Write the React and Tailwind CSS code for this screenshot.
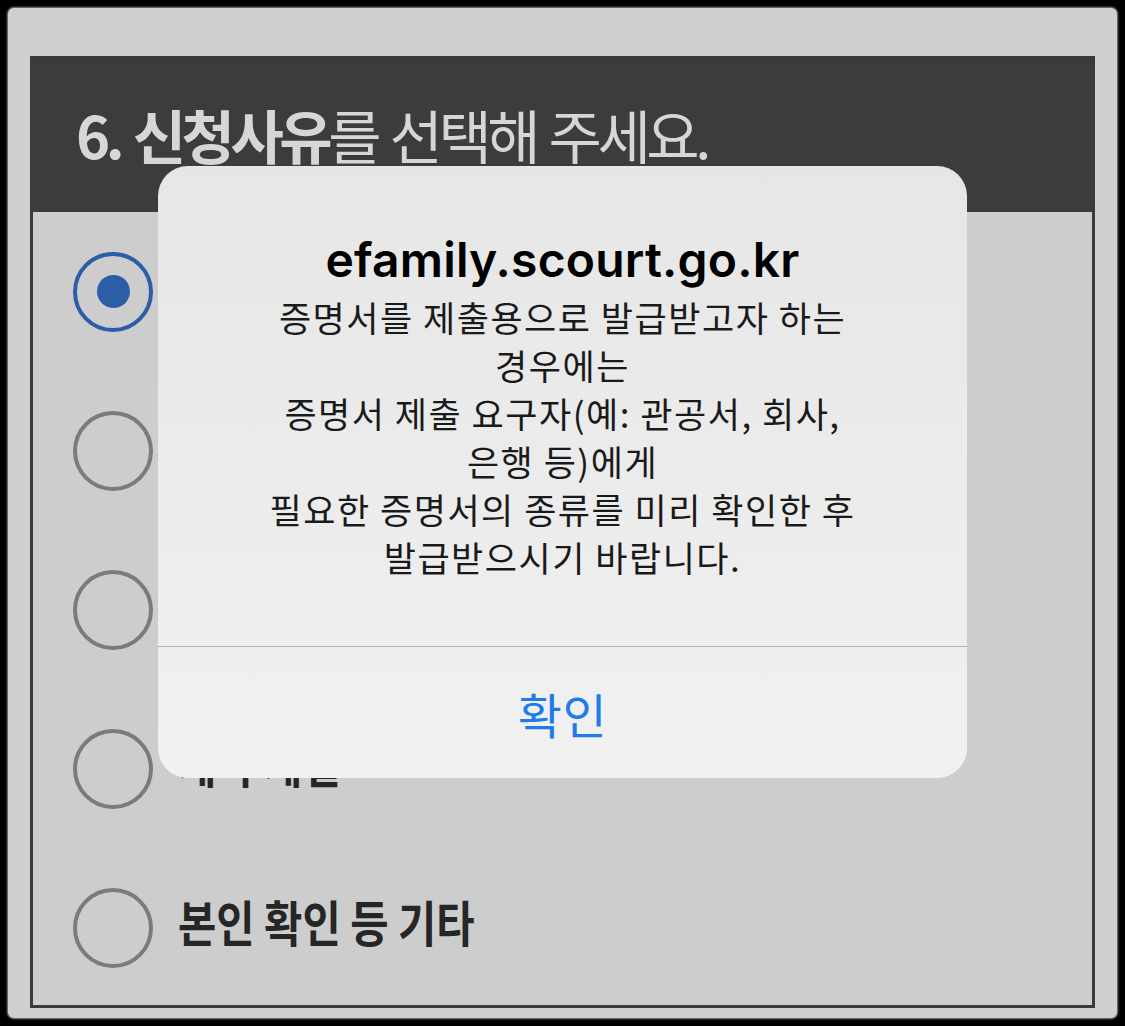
import React from 'react';

/* ========================================================================
 * DATOS
 * ======================================================================== */
const REASONS = [
  { label: '회사 제출', checked: true },
  { label: '관공서 제출', checked: false },
  { label: '금융기관 제출', checked: false },
  { label: '계약 체결', checked: false },
  { label: '본인 확인 등 기타', checked: false },
];

const MESSAGE = [
  '증명서를 제출용으로 발급받고자 하는',
  '경우에는',
  '증명서 제출 요구자(예: 관공서, 회사,',
  '은행 등)에게',
  '필요한 증명서의 종류를 미리 확인한 후',
  '발급받으시기 바랍니다.',
];

const KR = { fontFamily: '"Noto Sans CJK KR", "Noto Sans", sans-serif' };

/* ========================================================================
 * RADIO
 * ======================================================================== */
const Radio = ({ checked }) => (
  <div
    className={`w-[80px] h-[80px] rounded-full border-[4px] flex items-center justify-center shrink-0 ${
      checked ? 'border-[#2c5ea8]' : 'border-[#7b7b7b]'
    }`}
  >
    {checked && <div className="w-[33px] h-[33px] rounded-full bg-[#2c5ea8]" />}
  </div>
);

/* ========================================================================
 * APP
 * ======================================================================== */
export default function App() {
  return (
    <div className="w-[1125px] h-[1026px] bg-black p-[8px] relative overflow-hidden" style={KR}>
      {/* panel gris */}
      <div className="w-[1109px] h-[1010px] bg-[#cfcfcf] rounded-[6px] pt-[48px] px-[22px] pb-[10px] shadow-[0_0_2px_1px_#8a8a8a]">
        {/* marco */}
        <div className="h-full border-[3px] border-[#3a3a3a] bg-[#cdcdcd] flex flex-col">
          <div className="h-[153px] bg-[#3c3c3c] flex items-center pl-[43px] pb-[4px] shrink-0">
            <h1 className="text-[58px] leading-none text-[#d6d6d6] tracking-[-4.5px] [word-spacing:4px]">
              <span className="font-bold">6. 신청사유</span>를 선택해 주세요.
            </h1>
          </div>
          <div className="flex-1 flex flex-col">
            {REASONS.map((r) => (
              <div key={r.label} className="h-[159px] flex items-center pl-[40px] gap-[25px]">
                <Radio checked={r.checked} />
                <span className="text-[49px] font-bold text-[#262626] leading-none whitespace-nowrap scale-x-[0.85] origin-left pb-[14px]">
                  {r.label}
                </span>
              </div>
            ))}
          </div>
        </div>
      </div>

      {/* alerta */}
      <div className="absolute left-[158px] top-[166px] w-[809px] h-[612px] rounded-[30px] bg-gradient-to-b from-[#e6e6e6] to-[#f1f1f1] flex flex-col">
        <div className="pt-[68px] pb-[65px] flex flex-col items-center">
          <div
            className="text-[48px] leading-[52px] font-semibold text-black tracking-[0.2px]"
            style={{ fontFamily: 'Inter, "Noto Sans", sans-serif' }}
          >
            efamily.scourt.go.kr
          </div>
          <div className="mt-[7px] flex flex-col items-center text-[35px] leading-[48px] text-[#1a1a1a] tracking-[1.5px]">
            {MESSAGE.map((line) => (
              <div key={line}>{line}</div>
            ))}
          </div>
        </div>
        <div className="h-px bg-[#b3b3b3]" />
        <div className="flex-1 flex items-center justify-center">
          <span className="text-[48px] text-[#1f7be6] leading-none tracking-[0.5px]">확인</span>
        </div>
      </div>
    </div>
  );
}
